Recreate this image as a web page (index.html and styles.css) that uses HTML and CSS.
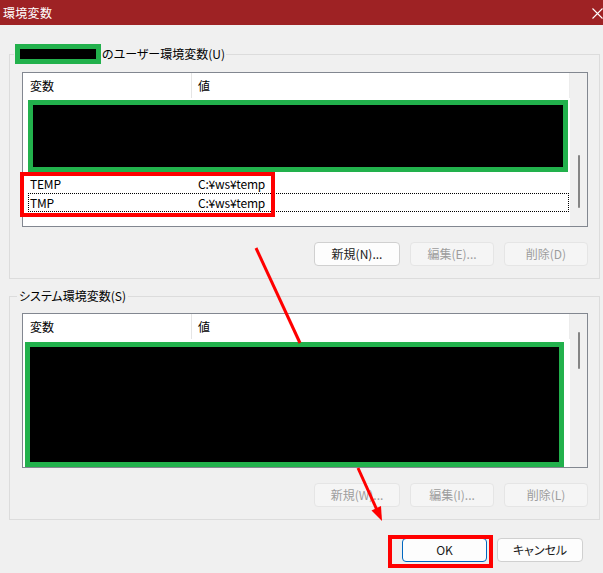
FILE: index.html
```html
<!DOCTYPE html>
<html lang="ja">
<head>
<meta charset="utf-8">
<title>環境変数</title>
<link rel="stylesheet" href="styles.css">
</head>
<body>
<div class="window">
  <div class="titlebar">
    <span class="title">環境変数</span>
    <svg class="close" width="11" height="11" viewBox="0 0 11 11"><path d="M0.5 0.5L10.5 10.5M10.5 0.5L0.5 10.5" stroke="#fff" stroke-width="1.1" fill="none"/></svg>
  </div>

  <fieldset class="group group-user">
    <legend class="legend legend-user"><span class="redact-name"></span><span class="legend-text">のユーザー環境変数(U)</span></legend>
    <div class="list">
      <div class="list-main">
        <div class="list-head">
          <div class="col-name">変数</div>
          <div class="col-value">値</div>
        </div>
        <div class="redact redact-user"></div>
        <div class="row"><div class="cell-name">TEMP</div><div class="cell-value">C:¥ws¥temp</div></div>
        <div class="row row-focus"><div class="cell-name">TMP</div><div class="cell-value">C:¥ws¥temp</div></div>
      </div>
      <div class="scrollbar"><div class="thumb thumb-user"></div></div>
    </div>
    <div class="buttons">
      <button class="btn btn-wide">新規(N)...</button>
      <button class="btn" disabled>編集(E)...</button>
      <button class="btn" disabled>削除(D)</button>
    </div>
  </fieldset>

  <fieldset class="group group-system">
    <legend class="legend legend-system">システム環境変数(S)</legend>
    <div class="list">
      <div class="list-main">
        <div class="list-head">
          <div class="col-name">変数</div>
          <div class="col-value">値</div>
        </div>
        <div class="redact redact-system"></div>
      </div>
      <div class="scrollbar"><div class="thumb thumb-system"></div></div>
    </div>
    <div class="buttons">
      <button class="btn btn-wide" disabled>新規(W)...</button>
      <button class="btn" disabled>編集(I)...</button>
      <button class="btn" disabled>削除(L)</button>
    </div>
  </fieldset>

  <div class="footer">
    <button class="btn btn-ok">OK</button>
    <button class="btn btn-cancel">キャンセル</button>
  </div>
</div>

<svg class="annotations" width="603" height="573" viewBox="0 0 603 573">
  <rect x="22" y="174" width="251" height="41" fill="none" stroke="#ff0000" stroke-width="4"/>
  <rect x="390" y="537" width="101" height="29" fill="none" stroke="#ff0000" stroke-width="4"/>
  <line x1="256" y1="248" x2="300" y2="343" stroke="#ff0000" stroke-width="3"/>
  <line x1="358" y1="468" x2="377" y2="510" stroke="#ff0000" stroke-width="3"/>
  <polygon points="382,521 381,506 371.5,510.5" fill="#ff0000"/>
</svg>
</body>
</html>
```

FILE: styles.css
```css
* { box-sizing: border-box; }

html, body {
  margin: 0;
  padding: 0;
}

body {
  width: 603px;
  height: 573px;
  overflow: hidden;
  position: relative;
  background: #f0f0f0;
  font-family: "Noto Sans CJK JP", "Noto Sans", sans-serif;
  font-size: 12px;
  font-feature-settings: "palt";
  color: #000;
}

.window {
  display: flex;
  flex-direction: column;
  width: 603px;
  height: 573px;
}

.titlebar {
  height: 25px;
  flex: none;
  background: #9e2224;
  color: #fff;
  display: flex;
  align-items: center;
  justify-content: space-between;
  padding-left: 3px;
}

.title {
  font-size: 12px;
  line-height: 16px;
  letter-spacing: 0.3px;
}

.close {
  display: block;
  margin-top: 1px;
}

.group {
  margin: 0 3px 0 9px;
  padding: 0 0 12px 0;
  border: 1px solid #dcdcdc;
  min-width: 0;
}

.group-user {
  margin-top: 19px;
}

.group-system {
  margin-top: 9px;
}

.legend {
  padding: 0 1px;
  display: flex;
  align-items: center;
  line-height: 16px;
}

.legend-user {
  margin-left: 4px;
  height: 20px;
}

.legend-system {
  margin-left: 7px;
  padding: 0 2px;
  height: 16px;
}

.redact-name {
  display: block;
  width: 86px;
  height: 20px;
  background: #000;
  border: 5px solid #22b14c;
}

.legend-text {
  margin-left: 1px;
}

.list {
  margin: 8px 0 0 12px;
  width: 566px;
  height: 155px;
  border: 1px solid #828790;
  background: #fff;
  display: flex;
}

.group-system .list {
  margin-top: 9px;
}

.list-main {
  flex: 1;
  min-width: 0;
  display: flex;
  flex-direction: column;
  background: #fff;
}

.list-head {
  height: 25px;
  flex: none;
  display: flex;
  align-items: center;
  border-right: 1px solid #ececec;
}

.col-name {
  width: 169px;
  height: 25px;
  line-height: 25px;
  padding-left: 7px;
  border-right: 1px solid #e5e5e5;
}

.col-value {
  padding-left: 6px;
  line-height: 25px;
}

.redact {
  flex: none;
  background: #000;
  border: 5px solid #22b14c;
}

.redact-user {
  margin: 2px 2px 0 5px;
  height: 72px;
}

.redact-system {
  margin: 3px 6px 0 2px;
  flex: 1;
}

.row {
  display: flex;
  height: 19px;
  line-height: 19px;
  margin: 0 1px 0 5px;
  letter-spacing: -0.2px;
}

.redact-user + .row {
  margin-top: 2px;
}

.row-focus {
  outline: 1px dotted #000;
  outline-offset: -1px;
}

.cell-name {
  width: 170px;
  padding-left: 2px;
}

.scrollbar {
  width: 17px;
  flex: none;
  background: #f0f0f0;
  position: relative;
  display: flex;
  justify-content: center;
}

.thumb {
  width: 2px;
  background: #858585;
  border-radius: 1px;
  margin-left: 1px;
}

.thumb-user {
  margin-top: 82px;
  height: 53px;
}

.thumb-system {
  margin-top: 18px;
  height: 37px;
}

.buttons {
  display: flex;
  justify-content: flex-end;
  gap: 10px;
  margin: 15px 11px 0 0;
}

.btn {
  font-family: inherit;
  font-size: 12px;
  font-feature-settings: "palt";
  width: 84px;
  height: 24px;
  padding: 0;
  line-height: 22px;
  border: 1px solid #d0d0d0;
  border-radius: 4px;
  background: #fdfdfd;
  color: #1a1a1a;
}

.btn-wide {
  width: 86px;
}

.btn:disabled {
  background: #f5f5f5;
  border-color: #e5e5e5;
  color: #9d9d9d;
}

.footer {
  display: flex;
  justify-content: flex-end;
  gap: 10px;
  margin-top: 18px;
  padding-right: 20px;
}

.btn-ok {
  width: 85px;
  border-color: #0067c0;
}

.btn-cancel {
  width: 86px;
}

.annotations {
  position: absolute;
  top: 0;
  left: 0;
  pointer-events: none;
}
```
